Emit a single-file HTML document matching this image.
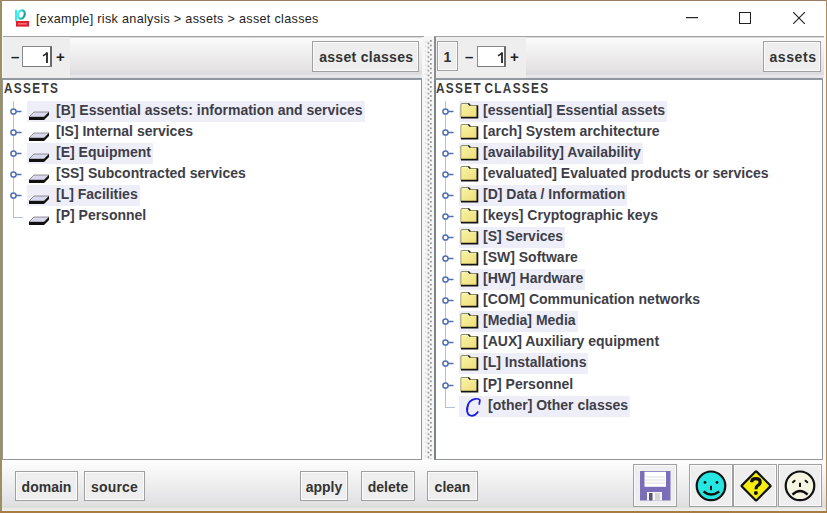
<!DOCTYPE html>
<html><head><meta charset="utf-8">
<style>
*{margin:0;padding:0;box-sizing:border-box}
html,body{width:827px;height:513px;overflow:hidden;background:#f8f8f8}
body{position:relative;font-family:"Liberation Sans",sans-serif;color:#333}
.abs{position:absolute}
#title{position:absolute;left:0;top:0;width:827px;height:36px;background:#fff}
#ttext{position:absolute;left:36px;top:11px;font-size:12.6px;letter-spacing:0.32px;line-height:16px;color:#222;white-space:nowrap}
.tb{position:absolute;top:36px;height:42px;border-top:1px solid #a2a2a2;background:linear-gradient(#c8c8c8 0px,#fafafa 1.5px,#e4e2e2 80%,#dadadd 90%,#ececf0 96%,#dcdce0 100%)}
.spin{position:absolute;top:0;height:41px;background:#eeeeee}
.btn{position:absolute;border:1px solid #a0a0a0;box-shadow:inset 0 0 0 1px #fbfbfb;background:#eeeeee;font-weight:bold;font-size:14px;color:#333;text-align:center;white-space:nowrap}
.inp{position:absolute;border:1px solid #8a8a8a;border-right:2px solid #6a6a6a;border-bottom-color:#7a7a7a;background:#fff;font-size:14px;line-height:21px;color:#222;-webkit-text-stroke:0.35px #222;text-align:right;padding-right:0.5px}
.sym{position:absolute;font-weight:bold;font-size:15px;color:#222;line-height:16px}
.tree{position:absolute;top:78px;height:382px;background:#fff;border:1px solid #92969c;border-top:2px solid #9298a0}
.root{position:absolute;top:80px;font-weight:bold;font-size:14px;letter-spacing:1.6px;word-spacing:-2.5px;line-height:16px;color:#3a3a3a;white-space:nowrap;transform:scaleX(0.84);transform-origin:0 0}
.row{position:absolute;height:21px;font-weight:bold;font-size:14px;color:#3e3e48;white-space:nowrap;line-height:19px}
.hl{background:#eeeef9}
#bottom{position:absolute;left:2px;top:460px;width:824px;height:51px;background:linear-gradient(#fefefe 0%,#e2e2e4 84%,#dcdcd8 92%,#ededeb 97%,#eeeeec 100%)}
.split{position:absolute;left:422px;top:37px;width:12px;height:423px;background:#f6f6f6}

</style></head><body>
<svg width="0" height="0" style="position:absolute"><defs><linearGradient id="fg" x1="0" y1="0" x2="1" y2="1"><stop offset="0" stop-color="#f6f4a4"/><stop offset="1" stop-color="#f0dc78"/></linearGradient></defs></svg>
<div id="title">
  <svg class="abs" style="left:14px;top:9px" width="17" height="19" viewBox="0 0 17 19">
    <defs><linearGradient id="cy" x1="0" x2="1" y1="0" y2="0"><stop offset="0" stop-color="#48f4f4"/><stop offset="1" stop-color="#189898"/></linearGradient></defs>
    <rect x="1" y="0.8" width="2.2" height="11.8" fill="#40e8e8"/>
    <ellipse cx="7.3" cy="5.5" rx="3.3" ry="4.3" transform="rotate(18 7.3 5.5)" fill="none" stroke="url(#cy)" stroke-width="2.2"/>
    <rect x="2" y="12" width="13" height="5.6" fill="#e01e2e"/>
    <rect x="4" y="14" width="9" height="1.6" fill="#f07080"/>
  </svg>
  <div id="ttext">[example] risk analysis &gt; assets &gt; asset classes</div>
  <svg class="abs" style="left:686px;top:17px" width="12" height="2"><rect width="12" height="1.2" fill="#222"/></svg>
  <svg class="abs" style="left:739px;top:12px" width="12" height="12"><rect x="0.5" y="0.5" width="11" height="11" fill="none" stroke="#222" stroke-width="1"/></svg>
  <svg class="abs" style="left:793px;top:12px" width="12" height="12"><path d="M0 0L12 12M12 0L0 12" stroke="#222" stroke-width="1.1"/></svg>
</div>

<!-- left toolbar -->
<div class="tb" style="left:3px;width:421px">
  <div class="spin" style="left:0;width:67px;height:41px"></div>
  <div class="sym" style="left:8px;top:12px">&#8211;</div>
  <div class="inp" style="left:19px;top:8.5px;width:30px;height:21px"><svg class="abs" style="left:19px;top:5px" width="8" height="12" viewBox="0 0 8 12"><path d="M5 0.6 L5 11" stroke="#222" stroke-width="1.8"/><path d="M1 3.8 Q3.6 2.6 5 0.6" fill="none" stroke="#222" stroke-width="1.5"/></svg></div>
  <div class="sym" style="left:53px;top:12px">+</div>
  <div class="btn" style="left:309px;top:4px;width:107px;height:31px;line-height:31px;letter-spacing:0.3px;padding-left:1.5px">asset classes</div>
</div>
<!-- right toolbar -->
<div class="tb" style="left:434px;width:389.5px;border-left:2px solid #8a8e94">
  <div class="spin" style="left:0;width:90px"></div>
  <div class="btn" style="left:1px;top:4px;width:21px;height:30px;line-height:30px">1</div>
  <div class="sym" style="left:29px;top:12px">&#8211;</div>
  <div class="inp" style="left:41px;top:8.5px;width:29px;height:21px"><svg class="abs" style="left:19px;top:5px" width="8" height="12" viewBox="0 0 8 12"><path d="M5 0.6 L5 11" stroke="#222" stroke-width="1.8"/><path d="M1 3.8 Q3.6 2.6 5 0.6" fill="none" stroke="#222" stroke-width="1.5"/></svg></div>
  <div class="sym" style="left:74px;top:12px">+</div>
  <div class="btn" style="left:327px;top:4px;width:58px;height:31px;line-height:31px;letter-spacing:0.6px;padding-left:2px">assets</div>
</div>

<div class="split"></div><svg class="abs" style="left:424px;top:40px" width="9" height="419"><defs><pattern id="dp" width="9" height="4.6" patternUnits="userSpaceOnUse"><rect x="3.6" y="2.3" width="1.7" height="1.7" fill="#8e8e8e"/><rect x="6" y="0" width="1.7" height="1.7" fill="#8e8e8e"/><rect x="1" y="1.2" width="1.5" height="1.5" fill="#dcdcdc"/></pattern></defs><rect width="9" height="419" fill="url(#dp)"/></svg>

<div class="tree" style="left:2px;width:420px"></div>
<div class="tree" style="left:434px;width:389px;border-left:2px solid #7c828a"></div>
<div class="root" style="left:4px">ASSETS</div>
<div class="root" style="left:436px">ASSET CLASSES</div>

<div class="abs" style="left:13px;top:101px;width:1px;height:116.19999999999999px;background:#b4c0da"></div>
<div class="row hl" style="left:27px;top:101.0px;padding-left:29px;padding-right:2px">[B] Essential assets: information and services</div>
<svg class="abs" style="left:9px;top:107.0px" width="14" height="8" viewBox="0 0 14 8"><circle cx="4.5" cy="4.5" r="2.6" fill="#fff" stroke="#5070b0" stroke-width="1.5"/><path d="M7 4.5 L12.5 4.5" stroke="#5070b0" stroke-width="1.5"/></svg>
<svg class="abs" style="left:28px;top:111.0px" width="22" height="10" viewBox="0 0 22 10">
<path d="M6 1 L21 1 L16 6 L1 6 Z" fill="#d8d8ec" stroke="#555" stroke-width="0.6"/>
<path d="M1 6 L16 6 L21 1 L21 4 L16 9 L1 9 Z" fill="#111"/>
</svg>
<div class="row" style="left:27px;top:122.03999999999999px;padding-left:29px;padding-right:2px">[IS] Internal services</div>
<svg class="abs" style="left:9px;top:128.04px" width="14" height="8" viewBox="0 0 14 8"><circle cx="4.5" cy="4.5" r="2.6" fill="#fff" stroke="#5070b0" stroke-width="1.5"/><path d="M7 4.5 L12.5 4.5" stroke="#5070b0" stroke-width="1.5"/></svg>
<svg class="abs" style="left:28px;top:132.04px" width="22" height="10" viewBox="0 0 22 10">
<path d="M6 1 L21 1 L16 6 L1 6 Z" fill="#d8d8ec" stroke="#555" stroke-width="0.6"/>
<path d="M1 6 L16 6 L21 1 L21 4 L16 9 L1 9 Z" fill="#111"/>
</svg>
<div class="row hl" style="left:27px;top:143.07999999999998px;padding-left:29px;padding-right:2px">[E] Equipment</div>
<svg class="abs" style="left:9px;top:149.07999999999998px" width="14" height="8" viewBox="0 0 14 8"><circle cx="4.5" cy="4.5" r="2.6" fill="#fff" stroke="#5070b0" stroke-width="1.5"/><path d="M7 4.5 L12.5 4.5" stroke="#5070b0" stroke-width="1.5"/></svg>
<svg class="abs" style="left:28px;top:153.07999999999998px" width="22" height="10" viewBox="0 0 22 10">
<path d="M6 1 L21 1 L16 6 L1 6 Z" fill="#d8d8ec" stroke="#555" stroke-width="0.6"/>
<path d="M1 6 L16 6 L21 1 L21 4 L16 9 L1 9 Z" fill="#111"/>
</svg>
<div class="row" style="left:27px;top:164.12px;padding-left:29px;padding-right:2px">[SS] Subcontracted services</div>
<svg class="abs" style="left:9px;top:170.12px" width="14" height="8" viewBox="0 0 14 8"><circle cx="4.5" cy="4.5" r="2.6" fill="#fff" stroke="#5070b0" stroke-width="1.5"/><path d="M7 4.5 L12.5 4.5" stroke="#5070b0" stroke-width="1.5"/></svg>
<svg class="abs" style="left:28px;top:174.12px" width="22" height="10" viewBox="0 0 22 10">
<path d="M6 1 L21 1 L16 6 L1 6 Z" fill="#d8d8ec" stroke="#555" stroke-width="0.6"/>
<path d="M1 6 L16 6 L21 1 L21 4 L16 9 L1 9 Z" fill="#111"/>
</svg>
<div class="row hl" style="left:27px;top:185.16px;padding-left:29px;padding-right:2px">[L] Facilities</div>
<svg class="abs" style="left:9px;top:191.16px" width="14" height="8" viewBox="0 0 14 8"><circle cx="4.5" cy="4.5" r="2.6" fill="#fff" stroke="#5070b0" stroke-width="1.5"/><path d="M7 4.5 L12.5 4.5" stroke="#5070b0" stroke-width="1.5"/></svg>
<svg class="abs" style="left:28px;top:195.16px" width="22" height="10" viewBox="0 0 22 10">
<path d="M6 1 L21 1 L16 6 L1 6 Z" fill="#d8d8ec" stroke="#555" stroke-width="0.6"/>
<path d="M1 6 L16 6 L21 1 L21 4 L16 9 L1 9 Z" fill="#111"/>
</svg>
<div class="row" style="left:27px;top:206.2px;padding-left:29px;padding-right:2px">[P] Personnel</div>
<div class="abs" style="left:13px;top:217.2px;width:10px;height:1px;background:#b4c0da"></div>
<svg class="abs" style="left:28px;top:216.2px" width="22" height="10" viewBox="0 0 22 10">
<path d="M6 1 L21 1 L16 6 L1 6 Z" fill="#d8d8ec" stroke="#555" stroke-width="0.6"/>
<path d="M1 6 L16 6 L21 1 L21 4 L16 9 L1 9 Z" fill="#111"/>
</svg>
<div class="abs" style="left:445px;top:101px;width:1px;height:305.56px;background:#b4c0da"></div>
<div class="row hl" style="left:459px;top:101.0px;padding-left:24px;padding-right:2px">[essential] Essential assets</div>
<svg class="abs" style="left:441px;top:107.0px" width="14" height="8" viewBox="0 0 14 8"><circle cx="4.5" cy="4.5" r="2.6" fill="#fff" stroke="#5070b0" stroke-width="1.5"/><path d="M7 4.5 L12.5 4.5" stroke="#5070b0" stroke-width="1.5"/></svg>
<svg class="abs" style="left:460px;top:102.0px" width="19" height="17" viewBox="0 0 19 17">
<path d="M1 15.5 L1 2.8 Q1 1.5 2.3 1.5 L8.3 1.5 L10.3 3.5 L17 3.5 L17.6 4.2" fill="none" stroke="#8c8c58" stroke-width="1.1"/>
<path d="M1.6 15 L1.6 2.5 L8 2.5 L10 4.3 L17 4.3 L17 15 Z" fill="url(#fg)"/>
<path d="M8.3 1.6 L10.3 3.6" stroke="#222" stroke-width="1.4"/>
<path d="M17.4 3.6 L17.4 15.6 L1 15.6" fill="none" stroke="#141414" stroke-width="1.8"/>
</svg>
<div class="row" style="left:459px;top:122.03999999999999px;padding-left:24px;padding-right:2px">[arch] System architecture</div>
<svg class="abs" style="left:441px;top:128.04px" width="14" height="8" viewBox="0 0 14 8"><circle cx="4.5" cy="4.5" r="2.6" fill="#fff" stroke="#5070b0" stroke-width="1.5"/><path d="M7 4.5 L12.5 4.5" stroke="#5070b0" stroke-width="1.5"/></svg>
<svg class="abs" style="left:460px;top:123.03999999999999px" width="19" height="17" viewBox="0 0 19 17">
<path d="M1 15.5 L1 2.8 Q1 1.5 2.3 1.5 L8.3 1.5 L10.3 3.5 L17 3.5 L17.6 4.2" fill="none" stroke="#8c8c58" stroke-width="1.1"/>
<path d="M1.6 15 L1.6 2.5 L8 2.5 L10 4.3 L17 4.3 L17 15 Z" fill="url(#fg)"/>
<path d="M8.3 1.6 L10.3 3.6" stroke="#222" stroke-width="1.4"/>
<path d="M17.4 3.6 L17.4 15.6 L1 15.6" fill="none" stroke="#141414" stroke-width="1.8"/>
</svg>
<div class="row hl" style="left:459px;top:143.07999999999998px;padding-left:24px;padding-right:2px">[availability] Availability</div>
<svg class="abs" style="left:441px;top:149.07999999999998px" width="14" height="8" viewBox="0 0 14 8"><circle cx="4.5" cy="4.5" r="2.6" fill="#fff" stroke="#5070b0" stroke-width="1.5"/><path d="M7 4.5 L12.5 4.5" stroke="#5070b0" stroke-width="1.5"/></svg>
<svg class="abs" style="left:460px;top:144.07999999999998px" width="19" height="17" viewBox="0 0 19 17">
<path d="M1 15.5 L1 2.8 Q1 1.5 2.3 1.5 L8.3 1.5 L10.3 3.5 L17 3.5 L17.6 4.2" fill="none" stroke="#8c8c58" stroke-width="1.1"/>
<path d="M1.6 15 L1.6 2.5 L8 2.5 L10 4.3 L17 4.3 L17 15 Z" fill="url(#fg)"/>
<path d="M8.3 1.6 L10.3 3.6" stroke="#222" stroke-width="1.4"/>
<path d="M17.4 3.6 L17.4 15.6 L1 15.6" fill="none" stroke="#141414" stroke-width="1.8"/>
</svg>
<div class="row" style="left:459px;top:164.12px;padding-left:24px;padding-right:2px">[evaluated] Evaluated products or services</div>
<svg class="abs" style="left:441px;top:170.12px" width="14" height="8" viewBox="0 0 14 8"><circle cx="4.5" cy="4.5" r="2.6" fill="#fff" stroke="#5070b0" stroke-width="1.5"/><path d="M7 4.5 L12.5 4.5" stroke="#5070b0" stroke-width="1.5"/></svg>
<svg class="abs" style="left:460px;top:165.12px" width="19" height="17" viewBox="0 0 19 17">
<path d="M1 15.5 L1 2.8 Q1 1.5 2.3 1.5 L8.3 1.5 L10.3 3.5 L17 3.5 L17.6 4.2" fill="none" stroke="#8c8c58" stroke-width="1.1"/>
<path d="M1.6 15 L1.6 2.5 L8 2.5 L10 4.3 L17 4.3 L17 15 Z" fill="url(#fg)"/>
<path d="M8.3 1.6 L10.3 3.6" stroke="#222" stroke-width="1.4"/>
<path d="M17.4 3.6 L17.4 15.6 L1 15.6" fill="none" stroke="#141414" stroke-width="1.8"/>
</svg>
<div class="row hl" style="left:459px;top:185.16px;padding-left:24px;padding-right:2px">[D] Data / Information</div>
<svg class="abs" style="left:441px;top:191.16px" width="14" height="8" viewBox="0 0 14 8"><circle cx="4.5" cy="4.5" r="2.6" fill="#fff" stroke="#5070b0" stroke-width="1.5"/><path d="M7 4.5 L12.5 4.5" stroke="#5070b0" stroke-width="1.5"/></svg>
<svg class="abs" style="left:460px;top:186.16px" width="19" height="17" viewBox="0 0 19 17">
<path d="M1 15.5 L1 2.8 Q1 1.5 2.3 1.5 L8.3 1.5 L10.3 3.5 L17 3.5 L17.6 4.2" fill="none" stroke="#8c8c58" stroke-width="1.1"/>
<path d="M1.6 15 L1.6 2.5 L8 2.5 L10 4.3 L17 4.3 L17 15 Z" fill="url(#fg)"/>
<path d="M8.3 1.6 L10.3 3.6" stroke="#222" stroke-width="1.4"/>
<path d="M17.4 3.6 L17.4 15.6 L1 15.6" fill="none" stroke="#141414" stroke-width="1.8"/>
</svg>
<div class="row" style="left:459px;top:206.2px;padding-left:24px;padding-right:2px">[keys] Cryptographic keys</div>
<svg class="abs" style="left:441px;top:212.2px" width="14" height="8" viewBox="0 0 14 8"><circle cx="4.5" cy="4.5" r="2.6" fill="#fff" stroke="#5070b0" stroke-width="1.5"/><path d="M7 4.5 L12.5 4.5" stroke="#5070b0" stroke-width="1.5"/></svg>
<svg class="abs" style="left:460px;top:207.2px" width="19" height="17" viewBox="0 0 19 17">
<path d="M1 15.5 L1 2.8 Q1 1.5 2.3 1.5 L8.3 1.5 L10.3 3.5 L17 3.5 L17.6 4.2" fill="none" stroke="#8c8c58" stroke-width="1.1"/>
<path d="M1.6 15 L1.6 2.5 L8 2.5 L10 4.3 L17 4.3 L17 15 Z" fill="url(#fg)"/>
<path d="M8.3 1.6 L10.3 3.6" stroke="#222" stroke-width="1.4"/>
<path d="M17.4 3.6 L17.4 15.6 L1 15.6" fill="none" stroke="#141414" stroke-width="1.8"/>
</svg>
<div class="row hl" style="left:459px;top:227.24px;padding-left:24px;padding-right:2px">[S] Services</div>
<svg class="abs" style="left:441px;top:233.24px" width="14" height="8" viewBox="0 0 14 8"><circle cx="4.5" cy="4.5" r="2.6" fill="#fff" stroke="#5070b0" stroke-width="1.5"/><path d="M7 4.5 L12.5 4.5" stroke="#5070b0" stroke-width="1.5"/></svg>
<svg class="abs" style="left:460px;top:228.24px" width="19" height="17" viewBox="0 0 19 17">
<path d="M1 15.5 L1 2.8 Q1 1.5 2.3 1.5 L8.3 1.5 L10.3 3.5 L17 3.5 L17.6 4.2" fill="none" stroke="#8c8c58" stroke-width="1.1"/>
<path d="M1.6 15 L1.6 2.5 L8 2.5 L10 4.3 L17 4.3 L17 15 Z" fill="url(#fg)"/>
<path d="M8.3 1.6 L10.3 3.6" stroke="#222" stroke-width="1.4"/>
<path d="M17.4 3.6 L17.4 15.6 L1 15.6" fill="none" stroke="#141414" stroke-width="1.8"/>
</svg>
<div class="row" style="left:459px;top:248.28px;padding-left:24px;padding-right:2px">[SW] Software</div>
<svg class="abs" style="left:441px;top:254.27999999999997px" width="14" height="8" viewBox="0 0 14 8"><circle cx="4.5" cy="4.5" r="2.6" fill="#fff" stroke="#5070b0" stroke-width="1.5"/><path d="M7 4.5 L12.5 4.5" stroke="#5070b0" stroke-width="1.5"/></svg>
<svg class="abs" style="left:460px;top:249.28px" width="19" height="17" viewBox="0 0 19 17">
<path d="M1 15.5 L1 2.8 Q1 1.5 2.3 1.5 L8.3 1.5 L10.3 3.5 L17 3.5 L17.6 4.2" fill="none" stroke="#8c8c58" stroke-width="1.1"/>
<path d="M1.6 15 L1.6 2.5 L8 2.5 L10 4.3 L17 4.3 L17 15 Z" fill="url(#fg)"/>
<path d="M8.3 1.6 L10.3 3.6" stroke="#222" stroke-width="1.4"/>
<path d="M17.4 3.6 L17.4 15.6 L1 15.6" fill="none" stroke="#141414" stroke-width="1.8"/>
</svg>
<div class="row hl" style="left:459px;top:269.32px;padding-left:24px;padding-right:2px">[HW] Hardware</div>
<svg class="abs" style="left:441px;top:275.32px" width="14" height="8" viewBox="0 0 14 8"><circle cx="4.5" cy="4.5" r="2.6" fill="#fff" stroke="#5070b0" stroke-width="1.5"/><path d="M7 4.5 L12.5 4.5" stroke="#5070b0" stroke-width="1.5"/></svg>
<svg class="abs" style="left:460px;top:270.32px" width="19" height="17" viewBox="0 0 19 17">
<path d="M1 15.5 L1 2.8 Q1 1.5 2.3 1.5 L8.3 1.5 L10.3 3.5 L17 3.5 L17.6 4.2" fill="none" stroke="#8c8c58" stroke-width="1.1"/>
<path d="M1.6 15 L1.6 2.5 L8 2.5 L10 4.3 L17 4.3 L17 15 Z" fill="url(#fg)"/>
<path d="M8.3 1.6 L10.3 3.6" stroke="#222" stroke-width="1.4"/>
<path d="M17.4 3.6 L17.4 15.6 L1 15.6" fill="none" stroke="#141414" stroke-width="1.8"/>
</svg>
<div class="row" style="left:459px;top:290.36px;padding-left:24px;padding-right:2px">[COM] Communication networks</div>
<svg class="abs" style="left:441px;top:296.36px" width="14" height="8" viewBox="0 0 14 8"><circle cx="4.5" cy="4.5" r="2.6" fill="#fff" stroke="#5070b0" stroke-width="1.5"/><path d="M7 4.5 L12.5 4.5" stroke="#5070b0" stroke-width="1.5"/></svg>
<svg class="abs" style="left:460px;top:291.36px" width="19" height="17" viewBox="0 0 19 17">
<path d="M1 15.5 L1 2.8 Q1 1.5 2.3 1.5 L8.3 1.5 L10.3 3.5 L17 3.5 L17.6 4.2" fill="none" stroke="#8c8c58" stroke-width="1.1"/>
<path d="M1.6 15 L1.6 2.5 L8 2.5 L10 4.3 L17 4.3 L17 15 Z" fill="url(#fg)"/>
<path d="M8.3 1.6 L10.3 3.6" stroke="#222" stroke-width="1.4"/>
<path d="M17.4 3.6 L17.4 15.6 L1 15.6" fill="none" stroke="#141414" stroke-width="1.8"/>
</svg>
<div class="row hl" style="left:459px;top:311.4px;padding-left:24px;padding-right:2px">[Media] Media</div>
<svg class="abs" style="left:441px;top:317.4px" width="14" height="8" viewBox="0 0 14 8"><circle cx="4.5" cy="4.5" r="2.6" fill="#fff" stroke="#5070b0" stroke-width="1.5"/><path d="M7 4.5 L12.5 4.5" stroke="#5070b0" stroke-width="1.5"/></svg>
<svg class="abs" style="left:460px;top:312.4px" width="19" height="17" viewBox="0 0 19 17">
<path d="M1 15.5 L1 2.8 Q1 1.5 2.3 1.5 L8.3 1.5 L10.3 3.5 L17 3.5 L17.6 4.2" fill="none" stroke="#8c8c58" stroke-width="1.1"/>
<path d="M1.6 15 L1.6 2.5 L8 2.5 L10 4.3 L17 4.3 L17 15 Z" fill="url(#fg)"/>
<path d="M8.3 1.6 L10.3 3.6" stroke="#222" stroke-width="1.4"/>
<path d="M17.4 3.6 L17.4 15.6 L1 15.6" fill="none" stroke="#141414" stroke-width="1.8"/>
</svg>
<div class="row" style="left:459px;top:332.44px;padding-left:24px;padding-right:2px">[AUX] Auxiliary equipment</div>
<svg class="abs" style="left:441px;top:338.44px" width="14" height="8" viewBox="0 0 14 8"><circle cx="4.5" cy="4.5" r="2.6" fill="#fff" stroke="#5070b0" stroke-width="1.5"/><path d="M7 4.5 L12.5 4.5" stroke="#5070b0" stroke-width="1.5"/></svg>
<svg class="abs" style="left:460px;top:333.44px" width="19" height="17" viewBox="0 0 19 17">
<path d="M1 15.5 L1 2.8 Q1 1.5 2.3 1.5 L8.3 1.5 L10.3 3.5 L17 3.5 L17.6 4.2" fill="none" stroke="#8c8c58" stroke-width="1.1"/>
<path d="M1.6 15 L1.6 2.5 L8 2.5 L10 4.3 L17 4.3 L17 15 Z" fill="url(#fg)"/>
<path d="M8.3 1.6 L10.3 3.6" stroke="#222" stroke-width="1.4"/>
<path d="M17.4 3.6 L17.4 15.6 L1 15.6" fill="none" stroke="#141414" stroke-width="1.8"/>
</svg>
<div class="row hl" style="left:459px;top:353.48px;padding-left:24px;padding-right:2px">[L] Installations</div>
<svg class="abs" style="left:441px;top:359.48px" width="14" height="8" viewBox="0 0 14 8"><circle cx="4.5" cy="4.5" r="2.6" fill="#fff" stroke="#5070b0" stroke-width="1.5"/><path d="M7 4.5 L12.5 4.5" stroke="#5070b0" stroke-width="1.5"/></svg>
<svg class="abs" style="left:460px;top:354.48px" width="19" height="17" viewBox="0 0 19 17">
<path d="M1 15.5 L1 2.8 Q1 1.5 2.3 1.5 L8.3 1.5 L10.3 3.5 L17 3.5 L17.6 4.2" fill="none" stroke="#8c8c58" stroke-width="1.1"/>
<path d="M1.6 15 L1.6 2.5 L8 2.5 L10 4.3 L17 4.3 L17 15 Z" fill="url(#fg)"/>
<path d="M8.3 1.6 L10.3 3.6" stroke="#222" stroke-width="1.4"/>
<path d="M17.4 3.6 L17.4 15.6 L1 15.6" fill="none" stroke="#141414" stroke-width="1.8"/>
</svg>
<div class="row" style="left:459px;top:374.52px;padding-left:24px;padding-right:2px">[P] Personnel</div>
<svg class="abs" style="left:441px;top:380.52px" width="14" height="8" viewBox="0 0 14 8"><circle cx="4.5" cy="4.5" r="2.6" fill="#fff" stroke="#5070b0" stroke-width="1.5"/><path d="M7 4.5 L12.5 4.5" stroke="#5070b0" stroke-width="1.5"/></svg>
<svg class="abs" style="left:460px;top:375.52px" width="19" height="17" viewBox="0 0 19 17">
<path d="M1 15.5 L1 2.8 Q1 1.5 2.3 1.5 L8.3 1.5 L10.3 3.5 L17 3.5 L17.6 4.2" fill="none" stroke="#8c8c58" stroke-width="1.1"/>
<path d="M1.6 15 L1.6 2.5 L8 2.5 L10 4.3 L17 4.3 L17 15 Z" fill="url(#fg)"/>
<path d="M8.3 1.6 L10.3 3.6" stroke="#222" stroke-width="1.4"/>
<path d="M17.4 3.6 L17.4 15.6 L1 15.6" fill="none" stroke="#141414" stroke-width="1.8"/>
</svg>
<div class="row hl" style="left:459px;top:395.56px;padding-left:29px;padding-right:2px">[other] Other classes</div>
<div class="abs" style="left:445px;top:406.56px;width:10px;height:1px;background:#b4c0da"></div>
<svg class="abs" style="left:464px;top:395.56px" width="20" height="22" viewBox="0 0 20 22">
<path d="M15.3 8 Q15.6 6 15.9 4 Q14.6 2.6 11.5 2.8 Q4 3.8 2.9 12.5 Q2.8 19.6 7.8 19.8 Q11.2 19.8 13.8 16" fill="none" stroke="#1a1ae0" stroke-width="1.7" stroke-linecap="round"/>
<path d="M4.5 8 Q3.2 11 3.5 14.5" fill="none" stroke="#1a1ae0" stroke-width="1.4"/>
</svg>

<div id="bottom">
  <div class="btn" style="left:13px;top:11px;width:63px;height:30px;line-height:30px">domain</div>
  <div class="btn" style="left:82px;top:11px;width:61px;height:30px;line-height:30px;letter-spacing:0.2px">source</div>
  <div class="btn" style="left:298px;top:11px;width:48px;height:30px;line-height:30px">apply</div>
  <div class="btn" style="left:359px;top:11px;width:54px;height:30px;line-height:30px">delete</div>
  <div class="btn" style="left:425px;top:11px;width:51px;height:30px;line-height:30px">clean</div>
  <div class="btn" style="left:631px;top:4px;width:44px;height:43px"></div>
  <div class="btn" style="left:687px;top:4px;width:44px;height:43px"></div>
  <div class="btn" style="left:731px;top:4px;width:44px;height:43px"></div>
  <div class="btn" style="left:776px;top:4px;width:44px;height:43px"></div>
</div>
<svg class="abs" style="left:640px;top:471px" width="31" height="30" viewBox="0 0 31 30">
  <rect x="0" y="0" width="30.5" height="29.5" fill="#7b6db8"/>
  <rect x="4.5" y="0.8" width="21.5" height="15" fill="#ffffff"/>
  <rect x="5.5" y="5.5" width="19.5" height="1" fill="#dcdcdc"/>
  <rect x="5.5" y="8.5" width="19.5" height="1" fill="#dcdcdc"/>
  <rect x="5.5" y="11.5" width="19.5" height="1" fill="#dcdcdc"/>
  <rect x="7" y="21" width="15" height="8.5" fill="#f4f4f4"/>
  <rect x="9" y="22" width="3.5" height="7.5" fill="#5a5478"/>
  <rect x="15" y="22" width="5" height="7.5" fill="#d4d4d4"/>
</svg>
<svg class="abs" style="left:694px;top:469px" width="34" height="34" viewBox="0 0 34 34">
  <circle cx="17" cy="16.8" r="14.3" fill="#26e6e2" stroke="#111" stroke-width="2.2"/>
  <circle cx="11" cy="13.4" r="1.4" fill="#111"/>
  <circle cx="23" cy="13.4" r="1.4" fill="#111"/>
  <rect x="16" y="16.8" width="2" height="4.4" fill="#111"/>
  <path d="M9.5 22.5 Q17 28.5 25.3 22.5" fill="none" stroke="#111" stroke-width="2.4"/>
</svg>
<svg class="abs" style="left:739px;top:469px" width="34" height="34" viewBox="0 0 34 34">
  <path d="M16.6 2.6 Q17.1 2.1 17.6 2.6 L31.3 16.4 Q31.8 16.9 31.3 17.4 L17.6 31.2 Q17.1 31.7 16.6 31.2 L2.9 17.4 Q2.4 16.9 2.9 16.4 Z" fill="#f6ee10" stroke="#111" stroke-width="2.2" stroke-linejoin="round"/>
  <path d="M12.6 13.2 Q12.6 9.6 16.9 9.6 Q21.2 9.6 21.2 13 Q21.2 15.2 18.6 16.6 Q17 17.5 17 20.2" fill="none" stroke="#111" stroke-width="3.2"/>
  <circle cx="16.9" cy="24" r="2" fill="#111"/>
</svg>
<svg class="abs" style="left:783px;top:469px" width="34" height="34" viewBox="0 0 34 34">
  <circle cx="17" cy="16.8" r="14.3" fill="#f4f4e0" stroke="#111" stroke-width="2.2"/>
  <path d="M9.9 13.2 L11.6 11.7" stroke="#111" stroke-width="1.9" stroke-linecap="round"/>
  <path d="M22.6 11.7 L24.3 13.2" stroke="#111" stroke-width="1.9" stroke-linecap="round"/>
  <rect x="16" y="13.8" width="2" height="4.2" fill="#111"/>
  <path d="M9.5 25.6 Q17 18.6 24.6 25.6" fill="none" stroke="#111" stroke-width="2.4"/>
</svg>


<div class="abs" style="left:0;top:0;width:827px;height:1px;background:#9a7d62"></div>
<div class="abs" style="left:0;top:0;width:2px;height:513px;background:#9c9060"></div>
<div class="abs" style="left:826px;top:0;width:1px;height:513px;background:#b08860"></div>
<div class="abs" style="left:0;top:511px;width:827px;height:2px;background:#a87c44"></div>
</body></html>
